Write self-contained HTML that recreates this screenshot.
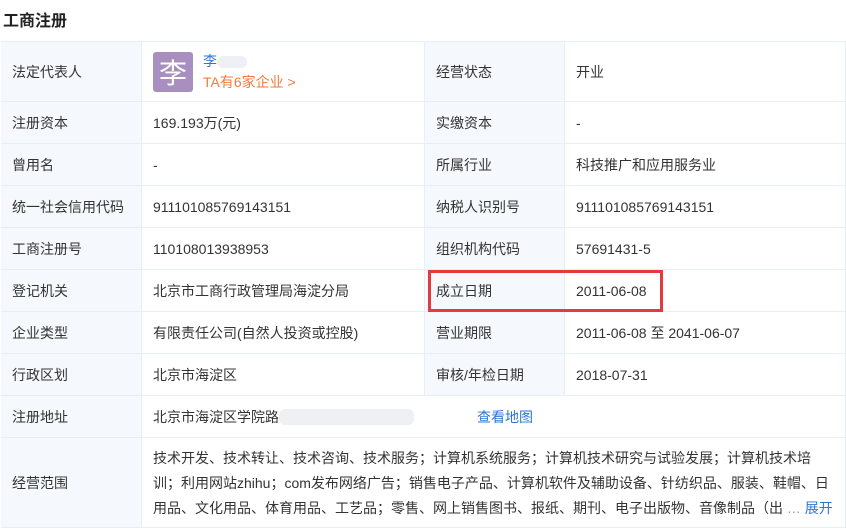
<!DOCTYPE html>
<html><head><meta charset="utf-8"><style>
body{margin:0;width:846px;height:522px;overflow:hidden;background:#fff;font-family:"Liberation Sans","Noto Sans CJK SC",sans-serif;color:#333;font-size:14px;position:relative}
.t{position:absolute;left:3px;top:7px;font-size:16px;font-weight:bold;color:#222}
.c{position:absolute;box-sizing:border-box;border-right:1px solid #e6eef6;border-bottom:1px solid #e6eef6;display:flex;align-items:center;padding-left:11px;white-space:nowrap}
.l{background:#f5f8fd}
.red{position:absolute;left:428px;top:270px;width:235px;height:42px;box-sizing:border-box;border:3px solid #e23a3e}
a{color:#2d76d3;text-decoration:none}
</style></head><body>
<div class="t">工商注册</div>
<div style="position:absolute;left:1px;top:41px;width:845px;border-top:1px solid #e6eef6;height:0"></div>
<div style="position:absolute;left:1px;top:41px;width:0;height:481px;border-left:1px solid #e6eef6"></div>
<div id="g"></div>
<div class="c l" style="left:1px;top:42px;width:141px;height:60px">法定代表人</div>
<div class="c" style="left:142px;top:42px;width:283px;height:60px">
<div style="width:40px;height:40px;background:#a98fc0;border-radius:3px;color:#fff;font-size:28px;display:flex;align-items:center;justify-content:center">李</div>
<div style="margin-left:10px;line-height:21px"><a>李</a><span style="display:inline-block;width:30px;height:12px;background:#eef0f5;border-radius:6px;vertical-align:middle"></span><br><span style="color:#f07b3f">TA有6家企业 &gt;</span></div></div>
<div class="c l" style="left:425px;top:42px;width:140px;height:60px">经营状态</div>
<div class="c" style="left:565px;top:42px;width:281px;height:60px">开业</div>
<script>
var rows=[["注册资本","169.193万(元)","实缴资本","-"],["曾用名","-","所属行业","科技推广和应用服务业"],["统一社会信用代码","911101085769143151","纳税人识别号","911101085769143151"],["工商注册号","110108013938953","组织机构代码","57691431-5"],["登记机关","北京市工商行政管理局海淀分局","成立日期","2011-06-08"],["企业类型","有限责任公司(自然人投资或控股)","营业期限","2011-06-08 至 2041-06-07"],["行政区划","北京市海淀区","审核/年检日期","2018-07-31"]];
var h="";rows.forEach(function(r,i){var y=102+i*42;
h+='<div class="c l" style="left:1px;top:'+y+'px;width:141px;height:42px">'+r[0]+'</div><div class="c" style="left:142px;top:'+y+'px;width:283px;height:42px">'+r[1]+'</div><div class="c l" style="left:425px;top:'+y+'px;width:140px;height:42px">'+r[2]+'</div><div class="c" style="left:565px;top:'+y+'px;width:281px;height:42px">'+r[3]+'</div>';});
document.getElementById("g").innerHTML=h;
</script>
<div class="c l" style="left:1px;top:396px;width:141px;height:42px">注册地址</div>
<div class="c" style="left:142px;top:396px;width:704px;height:42px">北京市海淀区学院路<span style="display:inline-block;width:135px;height:16px;background:#eef0f3;border-radius:6px"></span><a style="margin-left:63px">查看地图</a></div>
<div class="c l" style="left:1px;top:438px;width:141px;height:90px">经营范围</div>
<div class="c" style="left:142px;top:438px;width:704px;height:90px;display:block;padding-top:8px;line-height:25px">技术开发、技术转让、技术咨询、技术服务；计算机系统服务；计算机技术研究与试验发展；计算机技术培<br>训；利用网站zhihu；com发布网络广告；销售电子产品、计算机软件及辅助设备、针纺织品、服装、鞋帽、日<br>用品、文化用品、体育用品、工艺品；零售、网上销售图书、报纸、期刊、电子出版物、音像制品（出 <span style="color:#999">…</span> <a>展开</a></div>
<div class="red"></div>
</body></html>
